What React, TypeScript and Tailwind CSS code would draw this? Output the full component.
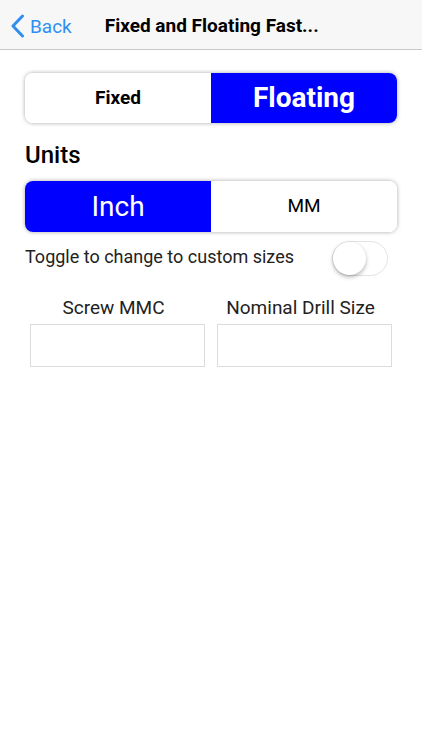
import React, { useState } from "react";

export default function App() {
  const [mode, setMode] = useState<"fixed" | "floating">("floating");
  const [unit, setUnit] = useState<"inch" | "mm">("inch");
  const [custom, setCustom] = useState(false);

  return (
    <div className="min-h-[750px] bg-white font-['Roboto',sans-serif] text-black">
      {/* nav bar */}
      <div className="flex h-[50px] items-center border-b border-[#c8c7cc] bg-[#f7f7f7] pt-[3px]">
        <button className="flex items-center pl-[10px] text-[#2f8ff0]">
          <svg width="15" height="24" viewBox="0 0 15 24" fill="none">
            <path d="M12.5 2 L3 12 L12.5 22" stroke="currentColor" strokeWidth="3" strokeLinecap="round" strokeLinejoin="round" />
          </svg>
          <span className="ml-[5px] text-[19px] leading-none">Back</span>
        </button>
        <div className="ml-[33px] text-[19px] font-bold">Fixed and Floating Fast...</div>
      </div>

      <div className="px-[25px] pt-[23px]">
        <div className="flex h-[50px] overflow-hidden rounded-[8px] shadow-[0_0_4px_rgba(0,0,0,0.35)]">
          <button
            onClick={() => setMode("fixed")}
            className={`flex flex-1 items-center justify-center font-bold ${mode === "fixed" ? "bg-[#0000ff] text-[28px] text-white" : "bg-white text-[19px] text-black"}`}
          >
            Fixed
          </button>
          <button
            onClick={() => setMode("floating")}
            className={`flex flex-1 items-center justify-center font-bold ${mode === "floating" ? "bg-[#0000ff] text-[28px] text-white" : "bg-white text-[19px] text-black"}`}
          >
            Floating
          </button>
        </div>

        <div className="mt-[17px] text-[24px] font-medium leading-[30px]">Units</div>

        <div className="mt-[11px] flex h-[51px] overflow-hidden rounded-[8px] shadow-[0_0_4px_rgba(0,0,0,0.35)]">
          <button
            onClick={() => setUnit("inch")}
            className={`flex flex-1 items-center justify-center ${unit === "inch" ? "bg-[#0000ff] text-[28px] text-white" : "bg-white text-[19px] text-black"}`}
          >
            Inch
          </button>
          <button
            onClick={() => setUnit("mm")}
            className={`flex flex-1 items-center justify-center ${unit === "mm" ? "bg-[#0000ff] text-[28px] text-white" : "bg-white text-[19px] text-black"}`}
          >
            MM
          </button>
        </div>

        <div className="mt-[9px] flex items-center justify-between">
          <span className="-mt-[4px] text-[18px] text-[#222]">Toggle to change to custom sizes</span>
          <button
            onClick={() => setCustom(!custom)}
            className={`relative mr-[9px] h-[35px] w-[56px] rounded-full border border-[#e3e3e3] ${custom ? "bg-[#4cd964]" : "bg-white"}`}
          >
            <span
              className={`absolute top-[0px] h-[33px] w-[33px] rounded-full bg-white shadow-[0_2px_4px_rgba(0,0,0,0.3)] ${custom ? "left-[21px]" : "left-[0px]"}`}
            />
          </button>
        </div>

        <div className="mt-[19px] grid grid-cols-2 gap-[12px] px-[5px]">
          <div className="flex flex-col items-center">
            <span className="mr-[8px] text-[19px] leading-[26px] text-[#222]">Screw MMC</span>
            <input className="mt-[3px] h-[43px] w-full border border-[#dcdcdc] outline-none" />
          </div>
          <div className="flex flex-col items-center">
            <span className="mr-[8px] text-[19px] leading-[26px] text-[#222]">Nominal Drill Size</span>
            <input className="mt-[3px] h-[43px] w-full border border-[#dcdcdc] outline-none" />
          </div>
        </div>
      </div>
    </div>
  );
}
